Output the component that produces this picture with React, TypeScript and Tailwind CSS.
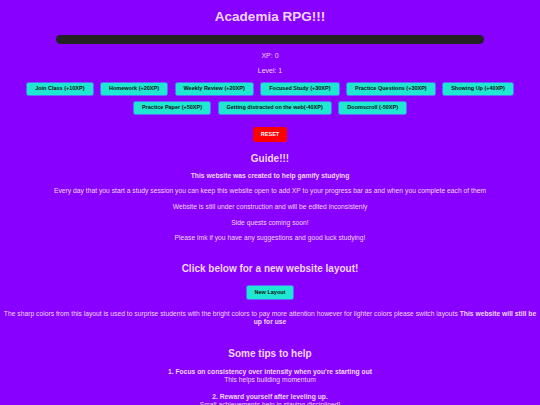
export default function App() {
  const row1 = [
    "Join Class (+10XP)",
    "Homework (+20XP)",
    "Weekly Review (+20XP)",
    "Focused Study (+30XP)",
    "Practice Questions (+30XP)",
    "Showing Up (+40XP)",
  ];
  const row2 = [
    "Practice Paper (+50XP)",
    "Getting distracted on the web(-40XP)",
    "Doomscroll (-50XP)",
  ];
  const btn =
    "rounded-[2.5px] bg-[#1ee8d2] border border-[#5a6bff] px-[8px] h-[14px] text-[5.5px] font-bold text-[#111] leading-none";
  return (
    <div className="min-h-[405px] w-[540px] bg-[#8800ff] text-center text-[#f3d6ff] font-['Liberation_Sans',Arial,sans-serif] overflow-hidden">
      <h1 className="pt-[8px] text-[13.5px] font-bold leading-[18px]">Academia RPG!!!</h1>
      <div className="mx-auto mt-[9px] h-[8.6px] w-[428px] rounded-full bg-[#232323]" />
      <p className="mt-[8px] text-[7px] leading-[8px]">XP: 0</p>
      <p className="mt-[7px] text-[7px] leading-[8px]">Level: 1</p>
      <div className="mt-[7px] flex flex-col items-center gap-[5px]">
        <div className="flex justify-center gap-[6.5px]">
          {row1.map((t) => (
            <button key={t} className={btn}>
              {t}
            </button>
          ))}
        </div>
        <div className="flex justify-center gap-[6.5px]">
          {row2.map((t) => (
            <button key={t} className={btn}>
              {t}
            </button>
          ))}
        </div>
      </div>
      <button className="mt-[12.5px] h-[14.7px] rounded-[2.5px] bg-[#ff0000] px-[8px] text-[5.5px] font-bold leading-none text-white">
        RESET
      </button>
      <h2 className="mt-[9px] text-[10px] font-bold leading-[13px]">Guide!!!</h2>
      <div className="mt-[7px] flex flex-col gap-[7.7px] text-[6.75px] leading-[8px]">
        <p className="font-bold">This website was created to help gamify studying</p>
        <p>
          Every day that you start a study session you can keep this website open to add XP to your
          progress bar as and when you complete each of them
        </p>
        <p>Website is still under construction and will be edited inconsistenly</p>
        <p>Side quests coming soon!</p>
        <p>Please lmk if you have any suggestions and good luck studying!</p>
      </div>
      <h2 className="mt-[19.3px] text-[10px] font-bold leading-[13px]">
        Click below for a new website layout!
      </h2>
      <button className="mt-[10.7px] h-[14.5px] rounded-[2.5px] border border-[#5a6bff] bg-[#1ee8d2] px-[8px] text-[5.5px] font-bold leading-none text-[#111]">
        New Layout
      </button>
      <p className="mt-[9.5px] px-[2px] text-[6.75px] leading-[7.75px]">
        The sharp colors from this layout is used to surprise students with the bright colors to pay
        more attention however for lighter colors please switch layouts{" "}
        <b>This website will still be up for use</b>
      </p>
      <h2 className="mt-[21px] text-[10px] font-bold leading-[13px]">Some tips to help</h2>
      <div className="mt-[8.5px] flex flex-col gap-[8.5px] text-[6.75px] leading-[8px]">
        <div>
          <p className="font-bold">1. Focus on consistency over intensity when you're starting out</p>
          <p>This helps building momentum</p>
        </div>
        <div>
          <p className="font-bold">2. Reward yourself after leveling up.</p>
          <p>Small achievements help in staying disciplined!</p>
        </div>
      </div>
    </div>
  );
}
